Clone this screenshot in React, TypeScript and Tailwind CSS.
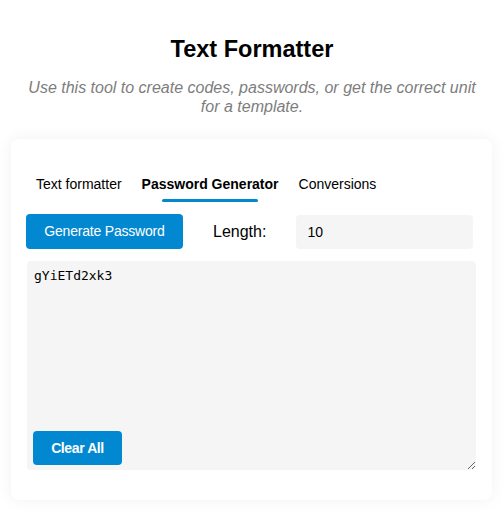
import { useState } from 'react';

const tabs = ['Text formatter', 'Password Generator', 'Conversions'];

export default function App() {
    const [tab, setTab] = useState(1);
    const [length, setLength] = useState('10');
    const [output, setOutput] = useState('gYiETd2xk3');

    function generate() {
        const chars = 'abcdefghijklmnopqrstuvwxyzABCDEFGHIJKLMNOPQRSTUVWXYZ0123456789';
        let s = '';
        for (let i = 0; i < (parseInt(length) || 0); i++) s += chars[Math.floor(Math.random() * chars.length)];
        setOutput(s);
    }

    return (
        <div className="min-h-[512px] bg-white font-['Liberation_Sans',Arial,sans-serif] text-black">
            <div className="flex flex-col items-center pt-[36px]">
                <h1 className="text-[23.5px] font-bold leading-[1.117]">Text Formatter</h1>
                <p className="mt-[17px] px-[20px] text-center text-[16px] italic leading-[18.4px] text-[#7d7d7d]">
                    Use this tool to create codes, passwords, or get the correct unit for a template.
                </p>
            </div>

            <div className="mx-[11px] mt-[23px] w-[481px] rounded-lg bg-white pl-[15px] pr-[16px] pt-[37px] pb-[30px] shadow-[0_0_16px_rgba(0,0,0,0.06)]">
                <div className="flex">
                    {tabs.map((t, i) => (
                        <button key={t} onClick={() => setTab(i)} className="flex cursor-pointer flex-col items-center px-[10px]">
                            <span className={`text-[14px] leading-[16px] ${i === tab ? 'font-bold' : ''}`}>{t}</span>
                            <span className={`mt-[7px] h-[3px] w-[70%] rounded-full ${i === tab ? 'bg-[#0288d1]' : 'bg-transparent'}`}></span>
                        </button>
                    ))}
                </div>

                <div className="mt-[12px] flex items-center gap-[30px]">
                    <button onClick={generate} className="h-[35px] w-[157px] cursor-pointer rounded bg-[#0288d1] text-[14px] tracking-[-0.2px] text-white">
                        Generate Password
                    </button>
                    <span className="text-[16px]">Length:</span>
                    <input
                        value={length}
                        onChange={e => setLength(e.target.value)}
                        className="h-[34px] w-[177px] rounded bg-[#f5f5f5] pl-[11px] text-[14px] outline-none"
                    />
                </div>

                <div className="relative mt-[12px] ml-[1px]">
                    <textarea
                        value={output}
                        onChange={e => setOutput(e.target.value)}
                        className="block h-[209px] w-[449px] rounded border-0 bg-[#f5f5f5] px-[7px] pt-[7px] font-['DejaVu_Sans_Mono',monospace] text-[13px] leading-[15px] outline-none"
                    />
                    <button onClick={() => setOutput('')} className="absolute bottom-[5px] left-[6px] h-[34px] w-[89px] cursor-pointer rounded bg-[#0288d1] text-[14px] font-semibold tracking-[-0.4px] text-white">
                        Clear All
                    </button>
                </div>
            </div>
        </div>
    );
}
